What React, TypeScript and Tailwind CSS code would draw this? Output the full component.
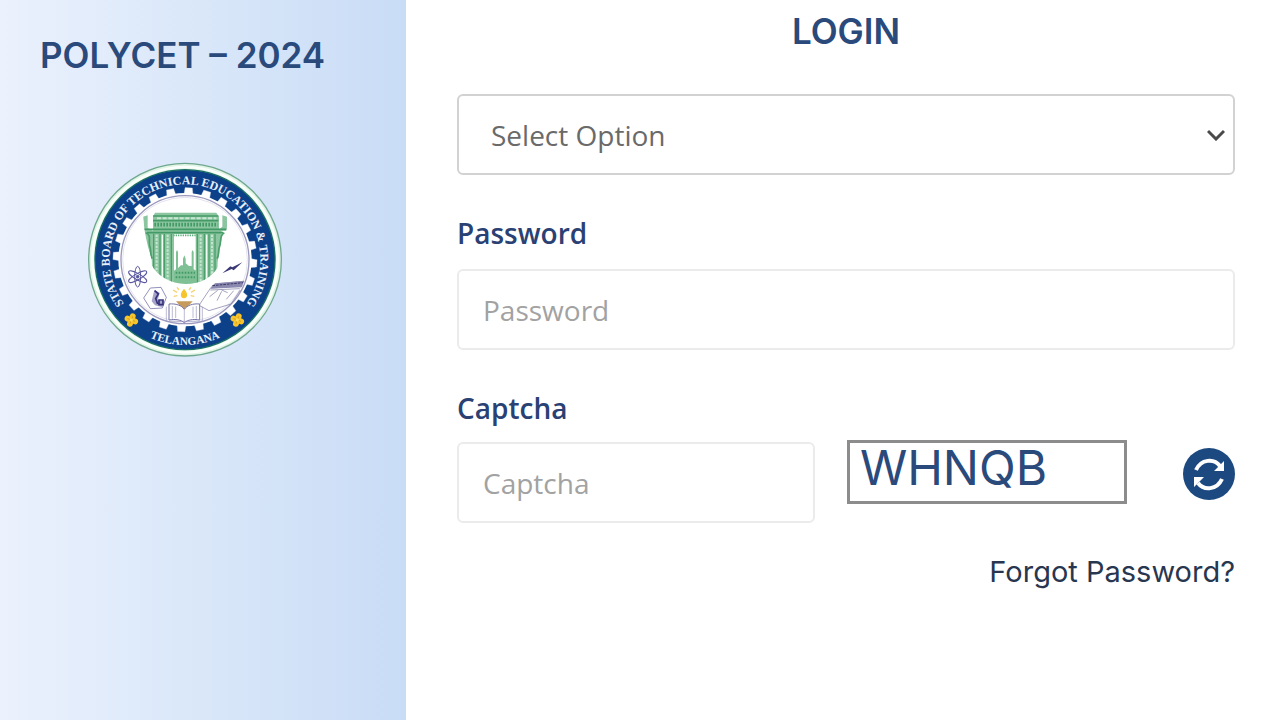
import React, { useState } from "react";

const TEETH = Array.from({ length: 24 }, (_, i) => i * 15 + 3);
const PETALS = [0, 90, 180, 270];

const LOGIN_OPTIONS = ["Select Option", "Coordinator", "Institution", "Student"];
const CAPTCHA_CODES = ["WHNQB", "KTRPX", "BMZQH"];

const Flower: React.FC<{ x: number; y: number }> = ({ x, y }) => (
  <g transform={`translate(${x} ${y}) rotate(20)`}>
    {PETALS.map((angle) => (
      <ellipse key={angle} cx="0" cy="-11" rx="9" ry="10" fill="#f7c52b" transform={`rotate(${angle})`} />
    ))}
    <path d="M-12 0H12M0-12V12" stroke="#c98f1c" strokeWidth="2" />
    <circle r="5" fill="#fbdc5a" />
  </g>
);

const BoardEmblem: React.FC = () => (
  <svg
    viewBox="20 20 588 588"
    className="size-[196px]"
    role="img"
    aria-label="State Board of Technical Education and Training, Telangana"
  >
    <defs>
      <path id="ring-top" d="M314 539A226 226 0 1 1 314.1 539" />
      <path id="ring-bottom" d="M58 313A256 256 0 0 0 570 313" />
      <clipPath id="arch-clip">
        <path d="M188 170H440V215C432 245 428 300 418 325C400 365 360 386 316 386C270 386 232 362 214 330C212 290 190 250 188 170Z" />
      </clipPath>
    </defs>

    {/* outer rings */}
    <circle cx="314" cy="313" r="289" fill="#e0f5e6" stroke="#6fa78e" strokeWidth="4" />
    <circle cx="314" cy="313" r="278" fill="none" stroke="#fbfffb" strokeWidth="8" />
    <circle cx="314" cy="313" r="270" fill="#0c4189" stroke="#186b61" strokeWidth="4" />

    {/* gear */}
    {TEETH.map((angle) => (
      <path
        key={angle}
        d="M300 120L303 97H325L328 120Z"
        fill="#fff"
        stroke="#b9c4e4"
        strokeWidth="1"
        transform={`rotate(${angle} 314 313)`}
      />
    ))}
    <circle cx="314" cy="313" r="200" fill="#fff" />
    <circle cx="314" cy="313" r="192" fill="none" stroke="#9c99be" strokeWidth="4" />
    <circle cx="314" cy="313" r="187" fill="none" stroke="#d5d5e6" strokeWidth="2" />

    <g fill="#e9effa" fontFamily="'Liberation Serif', serif" fontWeight="700">
      <text textAnchor="middle" fontSize="36">
        <textPath href="#ring-top" startOffset="50%">
          STATE BOARD OF TECHNICAL EDUCATION &amp; TRAINING
        </textPath>
      </text>
      <text textAnchor="middle" fontSize="34">
        <textPath href="#ring-bottom" startOffset="50%">
          TELANGANA
        </textPath>
      </text>
    </g>
    <Flower x={153} y={494} />
    <Flower x={471} y={494} />

    {/* Kakatiya arch */}
    <g clipPath="url(#arch-clip)">
      <path d="M188 184L202 180V218L218 226V184L224 172H408L416 184V222L426 214V180L440 184V226H424V250L412 320L410 400H346V236H281V400H216L214 310L192 248Z" fill="#8cc6a0" />
      <path d="M188 222H440M218 182H414M218 196H414M200 232H428" stroke="#439a67" strokeWidth="5" fill="none" />
      <path d="M222 208H412" stroke="#439a67" strokeWidth="11" strokeDasharray="5 4" />
      <path d="M230 189H408" stroke="#c8e6d1" strokeWidth="6" strokeDasharray="12 5" />
      <path d="M220 236V386M239 236V386M252 236V386M273 236V386M351 236V386M372 236V386M386 236V386M404 236V386" stroke="#4a9f6b" strokeWidth="4" />
      <path d="M229 238V386M262 238V386M361 238V386M395 238V386" stroke="#c5e5cf" strokeWidth="6" strokeDasharray="7 4" />
      <path d="M246 238V386M379 238V386" stroke="#f3fbf5" strokeWidth="4" />
      <path d="M196 232C214 238 204 256 208 272C214 286 208 296 216 310M432 232C416 240 424 256 418 272C412 286 418 296 410 310" stroke="#4a9f6b" strokeWidth="5" fill="none" />
      <path d="M279 240H348" stroke="#5fad7b" strokeWidth="5" strokeDasharray="4 3" />
      <path d="M281 386V346L287 342V290L290 284L293 290V338L302 330H308V310L312 300L316 310V324L326 332H334V290L337 284L340 290V342L348 346V386Z" fill="#7fc095" />
      <path d="M286 352H344M286 366H344" stroke="#439a67" strokeWidth="6" strokeDasharray="5 4" />
    </g>

    {/* atom */}
    <g transform="translate(172 364)" fill="none" stroke="#5a579d" strokeWidth="3">
      <ellipse rx="9" ry="31" />
      <ellipse rx="9" ry="31" transform="rotate(60)" />
      <ellipse rx="9" ry="31" transform="rotate(120)" />
      <circle r="4" fill="#5a579d" />
    </g>

    {/* hexagon with machine */}
    <path d="M210 398L242 396L258 426L246 458L210 460L190 428Z" fill="#fff" stroke="#5c599b" strokeWidth="2" />
    <path d="M222 404L238 412L232 434L250 436L247 456L224 450L214 438Z" fill="#a5a3ca" />
    <path d="M223 406L234 416L226 430L232 446M236 434H248V448H236Z" fill="none" stroke="#35327a" strokeWidth="5" />

    {/* lightning */}
    <path d="M426 354L450 333L456 336L486 321L460 345L454 341Z" fill="#3b3876" />

    {/* drafting board */}
    <path d="M356 450L392 396L404 386L490 378M392 398L486 390M390 404L478 400" fill="none" stroke="#77759f" strokeWidth="2" />
    <path d="M404 384L492 376L484 396L390 400Z" fill="#8c89b0" />
    <path d="M396 391L488 382" stroke="#3b3869" strokeWidth="3" strokeDasharray="8 3" />
    <path d="M388 424L412 405M410 436L424 408M424 404L442 412M438 432L460 406M356 450L386 466L452 446L480 404" fill="none" stroke="#77749e" strokeWidth="2" />

    {/* lamp */}
    <path d="M311 400C323 414 324 426 311 429C298 426 299 414 311 400Z" fill="#f6c42c" />
    <path d="M278 404L290 411M280 423L291 421M344 404L332 411M342 423L331 421M290 396L296 404M332 396L326 404" stroke="#f7d26b" strokeWidth="4" />
    <path d="M287 438H337L324 452L312 462L299 452Z" fill="#c69b5b" />

    {/* book */}
    <path d="M266 446C286 444 304 450 312 462C320 450 338 444 358 446V494C338 490 322 494 312 502C302 494 286 490 266 494Z" fill="#fff" stroke="#7774a7" strokeWidth="3" />
    <path d="M312 462V502M276 452V490M348 452V490M258 454V498H366V454M286 454V488M338 454V488" fill="none" stroke="#9c9ac0" strokeWidth="2" />
  </svg>
);

const RefreshIcon: React.FC = () => (
  <svg viewBox="0 0 52 52" className="size-[52px]" aria-hidden="true">
    <circle cx="26" cy="26" r="26" fill="#1c4a80" />
    <path d="M13 22C18 11 31 10 37 18M39 31C34 42 21 43 15 35" fill="none" stroke="#fff" strokeWidth="4" />
    <path d="M41 13V23H31ZM11 39V29H21Z" fill="#fff" />
  </svg>
);

export default function App() {
  const [role, setRole] = useState(LOGIN_OPTIONS[0]);
  const [password, setPassword] = useState("");
  const [captcha, setCaptcha] = useState("");
  const [codeIndex, setCodeIndex] = useState(0);

  const refreshCaptcha = () => {
    setCodeIndex((prev) => (prev + 1) % CAPTCHA_CODES.length);
    setCaptcha("");
  };

  return (
    <div className="grid min-h-screen grid-cols-[406px_1fr] bg-white font-['Open_Sans',sans-serif] text-[28px] leading-10">
      <aside className="bg-linear-to-r from-[#ebf1fd] via-[#d9e7f9] to-[#c9dcf6] px-10 pt-8">
        <h1 className="font-['Inter',sans-serif] text-[35px] leading-[46px] font-semibold whitespace-nowrap text-[#2a4a7c]">
          POLYCET – 2024
        </h1>
        <div className="mt-[84px] flex pl-[47px]">
          <BoardEmblem />
        </div>
      </aside>

      <main className="pt-2 pr-[45px] pl-[51px]">
        <h2 className="text-center font-['Inter',sans-serif] text-[35px] leading-[46px] font-semibold text-[#2a4a7c]">
          LOGIN
        </h2>

        <form onSubmit={(e) => e.preventDefault()}>
          <div className="relative mt-10">
            <select
              aria-label="Login type"
              value={role}
              onChange={(e) => setRole(e.target.value)}
              className="block h-[81px] w-full appearance-none rounded-md border-2 border-[#d2d2d2] bg-white px-8 text-[#6a6a6a]"
            >
              {LOGIN_OPTIONS.map((option) => (
                <option key={option}>{option}</option>
              ))}
            </select>
            <svg
              viewBox="0 0 18 12"
              className="pointer-events-none absolute top-1/2 right-[10px] h-3 w-[18px] -translate-y-1/2"
              aria-hidden="true"
            >
              <path d="M1 2L9 10L17 2" fill="none" stroke="#4a4a4a" strokeWidth="3" />
            </svg>
          </div>

          <label htmlFor="password" className="mt-[38px] block font-semibold text-[#2a4174]">
            Password
          </label>
          <input
            id="password"
            type="password"
            placeholder="Password"
            value={password}
            onChange={(e) => setPassword(e.target.value)}
            className="mt-4 block h-[81px] w-full rounded-md border-2 border-[#ebebeb] px-6 text-[#666] placeholder:text-[#a2a2a2]"
          />

          <label htmlFor="captcha" className="mt-[38px] block font-semibold text-[#2a4174]">
            Captcha
          </label>
          <div className="mt-3 flex items-start">
            <input
              id="captcha"
              type="text"
              placeholder="Captcha"
              value={captcha}
              onChange={(e) => setCaptcha(e.target.value)}
              className="mt-[2px] h-[81px] w-[46%] rounded-md border-2 border-[#ebebeb] px-6 text-[#666] placeholder:text-[#a2a2a2]"
            />
            <div className="ml-8 h-16 w-[36%] border-3 border-[#8c8c8c] px-[10px] font-['Inter',sans-serif] text-[48px] leading-[50px] text-[#2a4a7c]">
              {CAPTCHA_CODES[codeIndex]}
            </div>
            <button type="button" aria-label="Refresh captcha" onClick={refreshCaptcha} className="mt-2 ml-auto cursor-pointer">
              <RefreshIcon />
            </button>
          </div>

          <div className="mt-7 text-right">
            <a href="#forgot" className="font-['Inter',sans-serif] text-[29px] text-[#29364f]">
              Forgot Password?
            </a>
          </div>
        </form>
      </main>
    </div>
  );
}
